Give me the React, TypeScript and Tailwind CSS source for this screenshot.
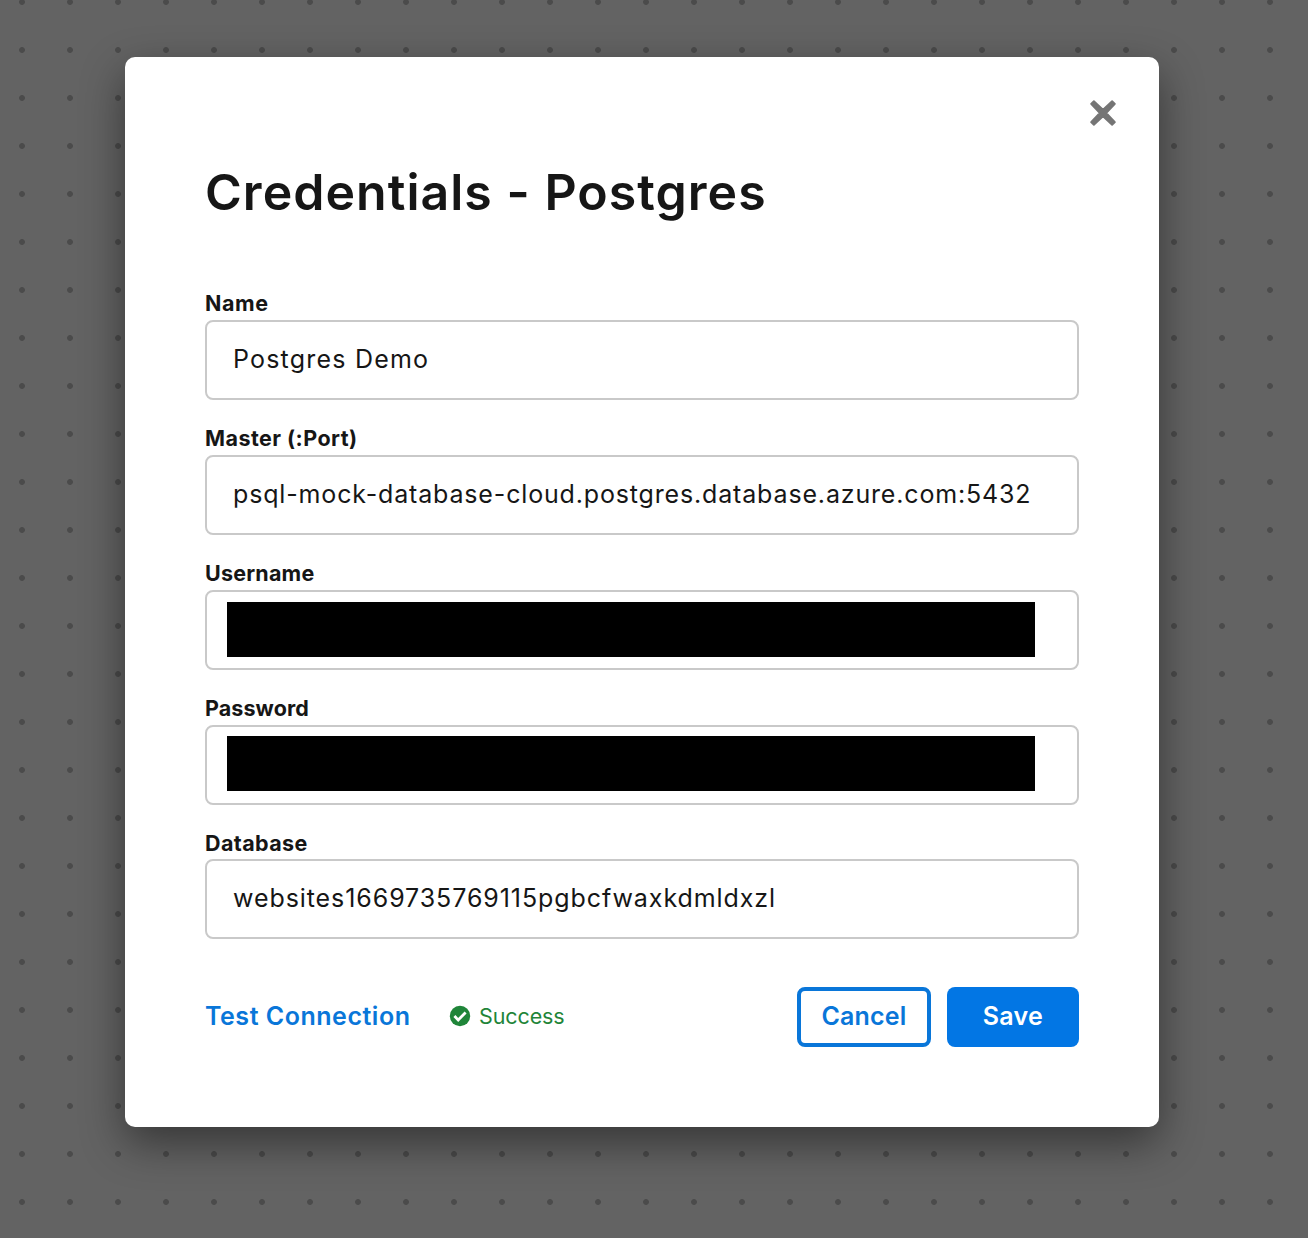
import { useState } from "react";

interface Field {
  id: string;
  label: string;
  value: string;
  redacted?: boolean;
  className: string;
  labelClass: string;
  inputClass: string;
}

const FIELDS: Field[] = [
  {
    id: "name",
    label: "Name",
    value: "Postgres Demo",
    className: "h-[135px]",
    labelClass: "leading-[29px] tracking-[0.6px]",
    inputClass: "tracking-[1.2px]",
  },
  {
    id: "master",
    label: "Master (:Port)",
    value: "psql-mock-database-cloud.postgres.database.azure.com:5432",
    className: "h-[135px]",
    labelClass: "leading-[29px] tracking-[0.45px]",
    inputClass: "tracking-[0.84px]",
  },
  {
    id: "username",
    label: "Username",
    value: "",
    redacted: true,
    className: "h-[135px]",
    labelClass: "leading-[29px] tracking-[0.2px]",
    inputClass: "pt-[10px]",
  },
  {
    id: "password",
    label: "Password",
    value: "",
    redacted: true,
    className: "h-[134px]",
    labelClass: "leading-[29px] tracking-[0.1px]",
    inputClass: "pt-[9px]",
  },
  {
    id: "database",
    label: "Database",
    value: "websites1669735769115pgbcfwaxkdmldxzl",
    className: "h-[111px]",
    labelClass: "leading-[31px] tracking-[0.4px]",
    inputClass: "tracking-[0.92px]",
  },
];

export default function App() {
  const [status] = useState<"success" | null>("success");

  return (
    <div className="h-[1238px] w-[1308px] overflow-hidden bg-[#636363] bg-[radial-gradient(circle_at_22px_26px,#4b4b4b_2.5px,transparent_3.3px)] bg-[length:48px_48px] bg-[position:0_-24px] pt-[57px] pl-[125px] font-['Inter','Liberation_Sans',sans-serif] text-[#161616]">
      <div
        role="dialog"
        aria-labelledby="dialog-title"
        className="flex h-[1070px] w-[1034px] flex-col rounded-[10px] bg-white px-20 shadow-[0_16px_44px_rgba(0,0,0,0.46)]"
      >
        <div className="-mr-[39px] flex h-[108px] justify-end pt-[41px]">
          <CloseButton />
        </div>
        <h1
          id="dialog-title"
          className="h-[124px] text-[50px] leading-[54px] font-semibold tracking-[1.03px] whitespace-nowrap"
        >
          Credentials - Postgres
        </h1>

        {FIELDS.map((f) => (
          <CredentialField key={f.id} field={f} />
        ))}

        <div className="mt-12 flex h-[60px] items-center">
          <button
            type="button"
            className="w-[244px] text-left text-[25px] font-semibold tracking-[0.52px] whitespace-nowrap text-[#0976d9]"
          >
            Test Connection
          </button>
          {status === "success" ? <SuccessStatus /> : null}
          <div className="ml-auto flex gap-4">
            <button
              type="button"
              className="h-[60px] w-[134px] rounded-[8px] border-4 border-[#0976d9] text-[25px] font-semibold tracking-[0.2px] text-[#0976d9]"
            >
              Cancel
            </button>
            <button
              type="button"
              className="h-[60px] w-[132px] rounded-[8px] bg-[#0276e4] text-[25px] font-semibold tracking-[0.3px] text-white"
            >
              Save
            </button>
          </div>
        </div>
      </div>
    </div>
  );
}

function CredentialField({ field }: { field: Field }) {
  return (
    <div className={`flex shrink-0 flex-col ${field.className}`}>
      <label
        htmlFor={field.id}
        className={`h-[31px] self-start text-[21.5px] font-bold whitespace-nowrap ${field.labelClass}`}
      >
        {field.label}
      </label>
      {field.redacted ? (
        <div
          id={field.id}
          className={`h-20 rounded-[8px] border-2 border-[#c9c9c9] pl-5 ${field.inputClass}`}
        >
          <div className="h-[55px] w-[808px] bg-black" />
        </div>
      ) : (
        <div
          id={field.id}
          className={`flex h-20 items-center rounded-[8px] border-2 border-[#c9c9c9] pl-[26px] text-[25px] whitespace-nowrap ${field.inputClass}`}
        >
          <span>{field.value}</span>
        </div>
      )}
    </div>
  );
}

function CloseButton() {
  return (
    <button type="button" aria-label="Close" className="h-[30px] w-[30px]">
      <svg viewBox="0 0 30 30" className="h-[30px] w-[30px]">
        <path
          d="M3.1 5.9 5.9 3.1 15 11.6 24.1 3.1 26.9 5.9 18.4 15 26.9 24.1 24.1 26.9 15 18.4 5.9 26.9 3.1 24.1 11.6 15Z"
          fill="#757575"
          stroke="#757575"
          strokeWidth="1.8"
          strokeLinejoin="round"
        />
      </svg>
    </button>
  );
}

function SuccessStatus() {
  return (
    <div className="flex items-center gap-[8px] pb-0.5 text-[#1f8539]">
      <svg viewBox="0 0 22 22" className="h-[22px] w-[22px]">
        <circle cx="11" cy="11" r="10.2" fill="currentColor" />
        <path
          d="m5.4 11.1 3.8 3.8 7.4-7.4"
          stroke="white"
          strokeWidth="2.8"
          fill="none"
        />
      </svg>
      <span className="text-[21.5px] tracking-[-0.1px]">Success</span>
    </div>
  );
}
